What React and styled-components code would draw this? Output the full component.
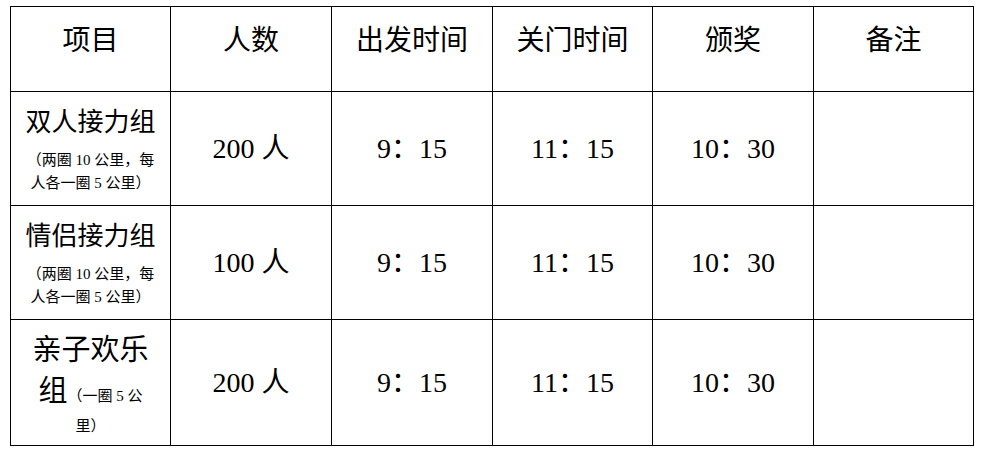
import React from "react";
import styled, { createGlobalStyle } from "styled-components";

const GlobalStyle = createGlobalStyle`
  html, body {
    margin: 0;
    padding: 0;
    background: #fff;
  }
  body {
    font-family: "Liberation Serif", "Noto Sans CJK SC", serif;
    color: #000;
  }
`;

const Page = styled.div`
  padding: 6px 0 0 10px;
`;

const Table = styled.table`
  border-collapse: collapse;
  table-layout: fixed;
  width: 963px;
`;

const HeadCell = styled.th`
  border: 1px solid #000;
  height: 70px;
  padding: 14px 0 0;
  vertical-align: top;
  font-weight: normal;
  font-size: 28px;
  line-height: 40px;
  text-align: center;
`;

const Cell = styled.td`
  border: 1px solid #000;
  height: ${(p) => p.$h}px;
  padding: 0 4px;
  vertical-align: middle;
  text-align: center;
  font-size: 28px;
  line-height: 40px;
`;

const Label = styled.div`
  font-size: ${(p) => p.$size || 26}px;
  line-height: ${(p) => p.$lh || 40}px;
`;

const Note = styled.div`
  margin-top: ${(p) => p.$gap || 0}px;
  font-size: 15px;
  line-height: ${(p) => p.$lh || 23}px;
`;

const Small = styled.span`
  font-size: 15px;
`;

const columns = [160, 161, 161, 160, 161, 160];
const headers = ["项目", "人数", "出发时间", "关门时间", "颁奖", "备注"];

const rows = [
  {
    label: "双人接力组",
    note: ["（两圈 10 公里，每", "人各一圈 5 公里）"],
    count: "200 人",
    start: "9：15",
    close: "11：15",
    award: "10：30",
    h: 113,
  },
  {
    label: "情侣接力组",
    note: ["（两圈 10 公里，每", "人各一圈 5 公里）"],
    count: "100 人",
    start: "9：15",
    close: "11：15",
    award: "10：30",
    h: 113,
  },
  {
    count: "200 人",
    start: "9：15",
    close: "11：15",
    award: "10：30",
    h: 125,
  },
];

const ItemCell = ({ row }) => {
  if (row.label) {
    return (
      <Cell $h={row.h}>
        <Label>{row.label}</Label>
        <Note $gap={6}>
          {row.note.map((line) => (
            <div key={line}>{line}</div>
          ))}
        </Note>
      </Cell>
    );
  }
  return (
    <Cell $h={row.h}>
      <Label $size={29} $lh={41}>亲子欢乐</Label>
      <Label $size={29} $lh={41}>
        组<Small>（一圈 5 公</Small>
      </Label>
      <Note $lh={19}>里）</Note>
    </Cell>
  );
};

export default function App() {
  return (
    <Page>
      <GlobalStyle />
      <Table>
        <colgroup>
          {columns.map((w, i) => (
            <col key={i} style={{ width: w }} />
          ))}
        </colgroup>
        <thead>
          <tr>
            {headers.map((h) => (
              <HeadCell key={h}>{h}</HeadCell>
            ))}
          </tr>
        </thead>
        <tbody>
          {rows.map((row, i) => (
            <tr key={i}>
              <ItemCell row={row} />
              <Cell $h={row.h}>{row.count}</Cell>
              <Cell $h={row.h}>{row.start}</Cell>
              <Cell $h={row.h}>{row.close}</Cell>
              <Cell $h={row.h}>{row.award}</Cell>
              <Cell $h={row.h} />
            </tr>
          ))}
        </tbody>
      </Table>
    </Page>
  );
}
